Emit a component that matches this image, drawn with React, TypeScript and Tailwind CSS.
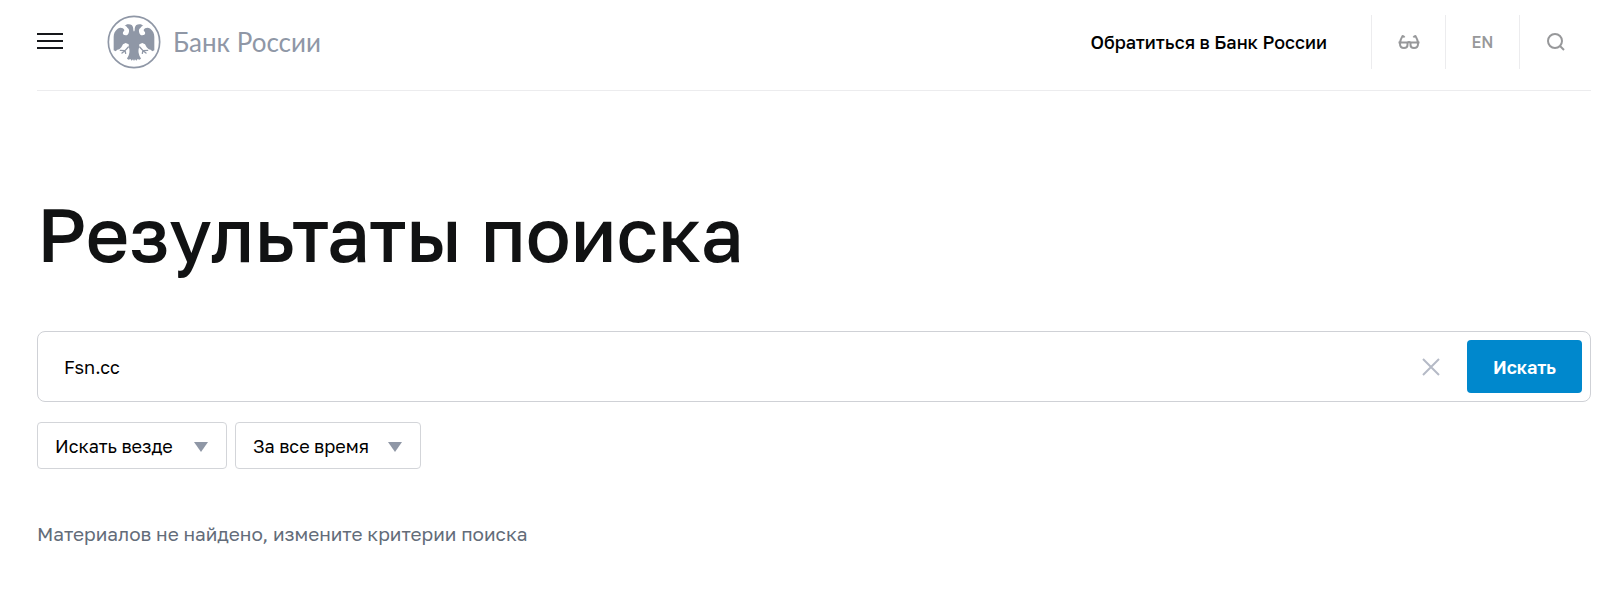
import { useState } from 'react';

const scopes = ['Искать везде', 'В документах', 'В новостях'];
const periods = ['За все время', 'За месяц', 'За год'];

function EagleEmblem() {
  return (
    <svg viewBox="0 0 162 162" className="size-[54px]" fill="#8f97a6" aria-hidden="true">
      <circle cx="81" cy="81" r="77" fill="none" stroke="#8f97a6" strokeWidth="5" />
      <path d="M79 46C79 38 78 34 74 30C70 27 64 28 60 28L53 33C57 33 60 35 61 38C65 40 67 44 66 50C65 57 61 61 56 61C50 61 46 57 48 52C49 49 52 49 52 45C49 38 39 36 32 41C24 47 20 55 20 66V106L26 109L31 104L37 103L43 97L48 88L56 84L65 88L66 98C68 104 68 112 66 118C65 123 62 127 60 131L65 134L70 132L74 137L78 133L81 138L84 133L88 137L92 132L97 134L102 131C100 127 97 123 96 118C94 112 94 104 96 98L97 88L106 84L114 88L119 97L125 103L131 104L136 109L142 106V66C142 55 138 47 130 41C123 36 113 38 110 45C110 49 113 49 114 52C116 57 112 61 106 61C101 61 97 57 96 50C95 44 97 40 101 38C102 35 105 33 109 33L102 28C98 28 92 27 88 30C84 34 83 38 83 46L81 50Z" />
      <g fill="none" stroke="#8f97a6" strokeWidth="4" strokeLinecap="round">
        <path d="M64 96L54 107L40 106M54 107L45 114M54 107L56 115" />
        <path d="M98 96L108 107L122 106M108 107L117 114M108 107L106 115" />
      </g>
    </svg>
  );
}

function GlassesIcon() {
  return (
    <svg viewBox="0 0 22 16" className="h-4 w-[22px]" fill="none" stroke="currentColor" strokeWidth="2" aria-hidden="true">
      <path d="M2 8.5H9.500V11Q9.500 14 6 14Q2 14 2 10ZM12.500 8.500H20V10Q20 14 16 14Q12.500 14 12.500 11Z" />
      <path d="M9.500 9Q11 7 12.500 9M2 10Q2 6 4 3Q5 1 6.500 3.500M20 10Q20 6 18 3Q17 1 15.500 3.500M0.500 8.500H2M20 8.500H21.500" />
    </svg>
  );
}

interface FilterProps {
  label: string;
  options: string[];
  className: string;
}

function Filter({ label, options, className }: FilterProps) {
  return (
    <div className="relative">
      <select
        aria-label={label}
        className={`h-[47px] appearance-none rounded border border-[#d3d5d9] bg-white pl-[17px] text-lg text-black outline-none ${className}`}
      >
        {options.map((option) => (
          <option key={option}>{option}</option>
        ))}
      </select>
      <svg viewBox="0 0 14 10" className="pointer-events-none absolute top-5 right-[19px] h-[10px] w-[14px]" fill="#8f97a6" aria-hidden="true">
        <path d="M0 0H14L7 10Z" />
      </svg>
    </div>
  );
}

export default function App() {
  const [query, setQuery] = useState('Fsn.cc');

  return (
    <div className="bg-white pr-[9px] pl-[37px] font-['Golos_Text','Inter',sans-serif] text-black">
      <header className="flex items-start border-b border-[#ececee] pt-[15px] pb-[21px]">
        <button type="button" aria-label="Меню" className="mt-[18px] flex w-[26px] flex-col gap-[5px]">
          <span className="h-[2px] w-full bg-[#16181b]" />
          <span className="h-[2px] w-full bg-[#16181b]" />
          <span className="h-[2px] w-full bg-[#16181b]" />
        </button>
        <a href="#" className="ml-11 flex items-center gap-3">
          <EagleEmblem />
          <span className="font-['Lato',sans-serif] text-[26px] leading-9 text-[#8f97a6]">Банк России</span>
        </a>
        <div className="ml-auto flex h-[54px] items-stretch text-[#97989a]">
          <a href="#" className="flex items-center pr-11 text-lg font-medium text-black">Обратиться в Банк России</a>
          <button type="button" aria-label="Версия для слабовидящих" className="flex w-[74px] items-center justify-center border-l border-[#ececee]">
            <GlassesIcon />
          </button>
          <a href="#" className="flex w-[74px] items-center justify-center border-l border-[#ececee] font-medium">EN</a>
          <button type="button" aria-label="Поиск" className="flex w-[72px] items-center justify-center border-l border-[#ececee]">
            <svg viewBox="0 0 20 20" className="size-5" fill="none" stroke="currentColor" strokeWidth="2" aria-hidden="true">
              <circle cx="9" cy="9" r="7" />
              <path d="M14 14L18 18" />
            </svg>
          </button>
        </div>
      </header>

      <main>
        <h1 className="mt-[98px] text-[75px] leading-[90px] font-medium text-[#111213]">Результаты поиска</h1>

        <form
          className="mt-[52px] flex h-[71px] items-center rounded-lg border border-[#cfd1d6] pr-2 pl-[26px]"
          onSubmit={(e) => e.preventDefault()}
        >
          <input
            type="text"
            aria-label="Поисковый запрос"
            value={query}
            onChange={(e) => setQuery(e.target.value)}
            className="h-full min-w-0 flex-1 text-lg outline-none"
          />
          <button type="button" aria-label="Очистить" className="mr-[27px]" onClick={() => setQuery('')}>
            <svg viewBox="0 0 18 18" className="size-[18px]" fill="none" stroke="#b5bac6" strokeWidth="2" aria-hidden="true">
              <path d="M1 1L17 17M17 1L1 17" />
            </svg>
          </button>
          <button type="submit" className="h-[53px] w-[115px] rounded bg-[#0088cd] text-lg font-semibold text-white">Искать</button>
        </form>

        <div className="mt-5 flex gap-2">
          <Filter label="Область поиска" options={scopes} className="w-[190px]" />
          <Filter label="Период" options={periods} className="w-[186px]" />
        </div>

        <p className="mt-[51px] text-[19px] leading-7 text-[#636c79]">Материалов не найдено, измените критерии поиска</p>
      </main>
    </div>
  );
}
